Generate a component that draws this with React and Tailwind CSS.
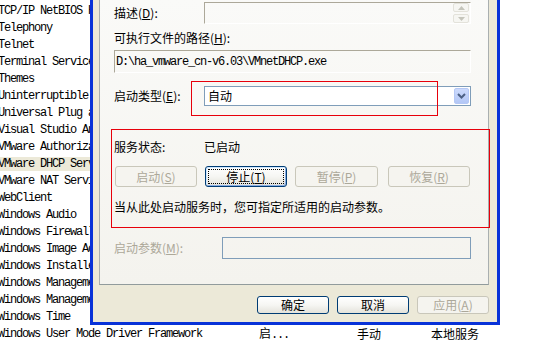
import React from "react";

const names = [
  "TCP/IP NetBIOS Helper",
  "Telephony",
  "Telnet",
  "Terminal Services",
  "Themes",
  "Uninterruptible Power Supply",
  "Universal Plug and Play Device Host",
  "Visual Studio Analyzer RPC bridge",
  "VMware Authorization Service",
  "VMware DHCP Service",
  "VMware NAT Service",
  "WebClient",
  "Windows Audio",
  "Windows Firewall/Internet Connection Sharing (ICS)",
  "Windows Image Acquisition (WIA)",
  "Windows Installer",
  "Windows Management Instrumentation",
  "Windows Management Instrumentation Driver Extensions",
  "Windows Time",
];

function U({ children }) {
  return <span className="underline underline-offset-[1px]">{children}</span>;
}

function DisabledBtn({ children, className = "" }) {
  return (
    <div
      className={
        "flex items-center justify-center rounded-[3px] border border-[#C9C7BA] bg-[#F5F4EF] text-[#ACA899] " +
        className
      }
    >
      {children}
    </div>
  );
}

function Btn({ children, className = "", focused = false }) {
  return (
    <div
      className={
        "flex rounded-[3px] border border-[#003C74] bg-gradient-to-b from-[#FFFFFF] via-[#F6F6F3] to-[#E4E3DB] text-black " +
        (focused ? "p-[2px] shadow-[inset_-1px_-1px_0_#89ADE4,inset_1px_1px_0_#CEE7FF] " : "") +
        className
      }
    >
      {focused ? (
        <div className="flex flex-1 items-center justify-center border border-dotted border-black">
          {children}
        </div>
      ) : (
        <div className="flex flex-1 items-center justify-center">{children}</div>
      )}
    </div>
  );
}

function UpArrow() {
  return (
    <svg width="7" height="4" viewBox="0 0 7 4">
      <path d="M0 4 L3.5 0 L7 4 Z" fill="#C5C5BB" />
    </svg>
  );
}
function DownArrow() {
  return (
    <svg width="7" height="4" viewBox="0 0 7 4">
      <path d="M0 0 L3.5 4 L7 0 Z" fill="#C5C5BB" />
    </svg>
  );
}

export default function App() {
  return (
    <div className="relative h-[342px] w-[560px] overflow-hidden bg-white text-black">
      {/* background services list */}
      <div className="flex flex-col pt-[2px] font-['Liberation_Mono','Noto_Sans_CJK_SC',monospace] text-[12px] tracking-[-1.2px]">
        {names.map((n, i) => (
          <div key={i} className="flex h-[17px] items-center">
            <div
              className={
                "ml-[-2px] flex h-[14px] w-[300px] items-center whitespace-nowrap " +
                (n === "VMware DHCP Service" ? "bg-[#ECE9D8]" : "")
              }
            >
              {n}
            </div>
          </div>
        ))}
        <div className="flex h-[17px] items-center whitespace-nowrap">
          <div className="ml-[-2px] w-[261px]">Windows User Mode Driver Framework</div>
          <div className="w-[98px] font-['Noto_Sans_CJK_SC',sans-serif] text-[12px] tracking-normal">
            启<span className="font-['Liberation_Mono',monospace] tracking-[-1.2px]">...</span>
          </div>
          <div className="w-[74px] font-['Noto_Sans_CJK_SC',sans-serif] text-[12px] tracking-normal">手动</div>
          <div className="font-['Noto_Sans_CJK_SC',sans-serif] text-[12px] tracking-normal">本地服务</div>
        </div>
      </div>

      {/* properties dialog window */}
      <div className="absolute left-[90px] top-0 flex h-[325px] w-[410px] flex-col border-x-[3px] border-b-[3px] border-[#0832D8] bg-[#ECE9D8] font-['Noto_Sans_CJK_SC',sans-serif] text-[12px] leading-[16px]">
        <div className="ml-[6px] flex h-[285px] w-[390px] flex-col border-x border-b border-x-[#A9AFB0] border-b-[#919B9C] bg-gradient-to-b from-[#FAFAF8] to-[#F4F3EE] pl-[14px]">
          {/* description */}
          <div className="mt-[2px] flex h-[22px] items-center">
            <div className="w-[90px]">
              描述(<U>D</U>):
            </div>
            <div className="flex h-[22px] w-[267px] justify-end border border-l-[#ACA899] border-t-[#ACA899] border-b-white border-r-white pr-[1px]">
              <div className="flex w-[16px] flex-col gap-[2px]">
                <div className="flex h-[9px] items-center justify-center rounded-[2px] border border-[#E3E2DA] bg-[#F6F6F2]">
                  <UpArrow />
                </div>
                <div className="flex h-[9px] items-center justify-center rounded-[2px] border border-[#E3E2DA] bg-[#F6F6F2]">
                  <DownArrow />
                </div>
              </div>
            </div>
          </div>

          {/* executable path */}
          <div className="mt-[6px] h-[16px]">
            可执行文件的路径(<U>H</U>):
          </div>
          <div className="mt-[4px] flex h-[23px] w-[357px] items-center border border-l-[#ACA899] border-t-[#ACA899] border-b-white border-r-white pl-[1px] font-['Liberation_Mono',monospace] text-[12px] tracking-[-1.2px]">
            D:\ha_vmware_cn-v6.03\VMnetDHCP.exe
          </div>

          {/* startup type */}
          <div className="mt-[13px] flex h-[20px] items-center">
            <div className="w-[90px]">
              启动类型(<U>E</U>):
            </div>
            <div className="flex h-[20px] w-[267px] items-center border border-[#7F9DB9] bg-white">
              <div className="flex-1 pl-[3px]">自动</div>
              <div className="mr-[1px] flex h-[16px] w-[15px] items-center justify-center rounded-[2px] border border-[#B5C8F5] bg-gradient-to-b from-[#CCDAFC] to-[#B3C7F6]">
                <svg width="9" height="6" viewBox="0 0 9 6">
                  <path d="M1 1 L4.5 4.5 L8 1" fill="none" stroke="#4D6185" strokeWidth="2" />
                </svg>
              </div>
            </div>
          </div>

          {/* service status */}
          <div className="mt-[33px] flex h-[16px] items-center">
            <div className="w-[90px]">服务状态:</div>
            <div>已启动</div>
          </div>

          {/* control buttons */}
          <div className="mt-[11px] flex h-[21px]">
            <DisabledBtn className="ml-[1px] w-[82px]">
              启动(<U>S</U>)
            </DisabledBtn>
            <Btn focused className="ml-[8px] w-[82px]">
              停止(<U>T</U>)
            </Btn>
            <DisabledBtn className="ml-[8px] w-[83px]">
              暂停(<U>P</U>)
            </DisabledBtn>
            <DisabledBtn className="ml-[10px] w-[82px]">
              恢复(<U>R</U>)
            </DisabledBtn>
          </div>

          <div className="mt-[12px] h-[16px]">当从此处启动服务时，您可指定所适用的启动参数。</div>

          {/* start parameters */}
          <div className="mt-[22px] flex h-[22px] items-center">
            <div className="w-[108px] text-[#ACA899]">
              启动参数(<U>M</U>):
            </div>
            <div className="h-[22px] w-[249px] border border-[#7F9DB9]" />
          </div>
        </div>

        {/* dialog buttons */}
        <div className="mt-[11px] flex justify-end gap-[8px] pr-[8px]">
          <Btn className="h-[18px] w-[72px]">确定</Btn>
          <Btn className="h-[18px] w-[72px]">取消</Btn>
          <DisabledBtn className="h-[18px] w-[72px]">
            应用(<U>A</U>)
          </DisabledBtn>
        </div>
      </div>

      {/* red annotation boxes */}
      <div className="absolute left-[191px] top-[81px] h-[35px] w-[247px] border border-red-600" />
      <div className="absolute left-[111px] top-[129px] h-[99px] w-[379px] border border-red-600" />
    </div>
  );
}
